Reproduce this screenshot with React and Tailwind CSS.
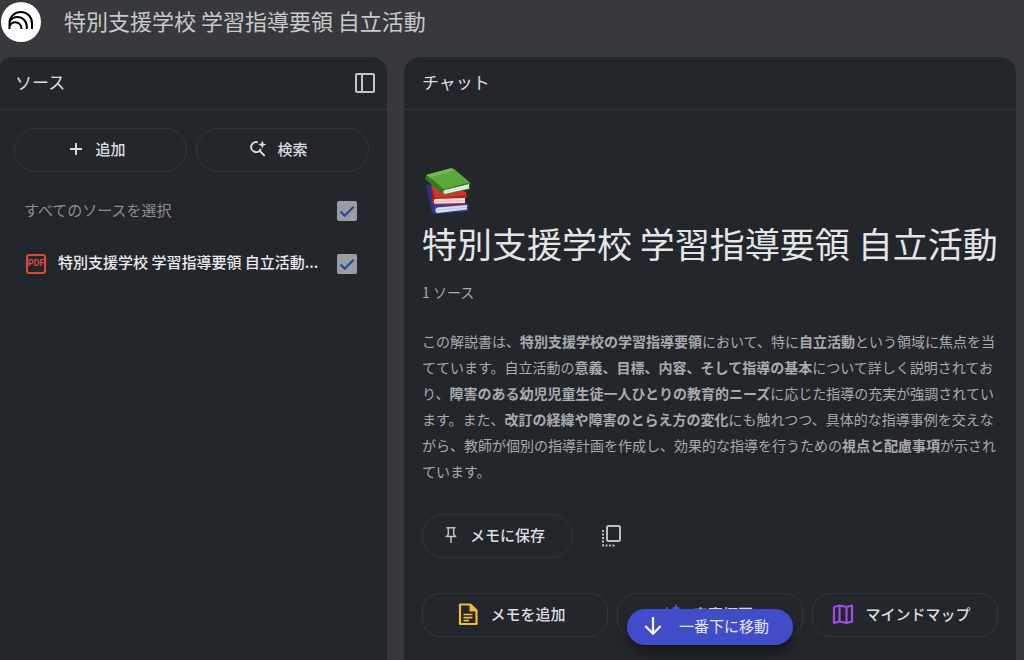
import { useState } from 'react'

const SUMMARY = [
  { text: 'この解説書は、' },
  { text: '特別支援学校の学習指導要領', bold: true },
  { text: 'において、特に' },
  { text: '自立活動', bold: true },
  { text: 'という領域に焦点を当てています。自立活動の' },
  { text: '意義、目標、内容、そして指導の基本', bold: true },
  { text: 'について詳しく説明されており、' },
  { text: '障害のある幼児児童生徒一人ひとりの教育的ニーズ', bold: true },
  { text: 'に応じた指導の充実が強調されています。また、' },
  { text: '改訂の経緯や障害のとらえ方の変化', bold: true },
  { text: 'にも触れつつ、具体的な指導事例を交えながら、教師が個別の指導計画を作成し、効果的な指導を行うための' },
  { text: '視点と配慮事項', bold: true },
  { text: 'が示されています。' },
]

const outlined = 'flex h-11 items-center justify-center gap-2.5 border border-[#34373b] pr-2 pb-0.5 text-[15px] font-medium text-[#dcdde0] hover:bg-white/5'

function Logo() {
  return (
    <svg viewBox="0 0 40 40" className="size-10" aria-hidden="true">
      <circle cx="20" cy="20" r="20" fill="#fff" />
      <g fill="none" stroke="#000" strokeWidth="2">
        <path d="M8.500 27v-5.500C8.500 15 13.300 10 19.800 10S31 15 31 21.500V27" />
        <path d="M8.500 19.500C10.500 16.500 13 15 16.200 15c5.400 0 9.600 4.200 9.600 9.600V27" />
        <path d="M8.500 24.200c1-2.500 3.200-4 5.700-4 3.600 0 6.400 2.900 6.400 6.800" />
      </g>
    </svg>
  )
}

function PanelIcon() {
  return (
    <svg viewBox="0 0 24 24" className="size-6" fill="none" stroke="#c4c5c7" strokeWidth="2" aria-hidden="true">
      <rect x="3" y="3" width="18" height="18" rx="1" />
      <path d="M9 3v18" />
    </svg>
  )
}

function PlusIcon() {
  return (
    <svg viewBox="0 0 18 18" className="size-[18px]" stroke="#dcdde0" strokeWidth="1.9" aria-hidden="true">
      <path d="M9 3v12M3 9h12" />
    </svg>
  )
}

function SearchSparkIcon() {
  return (
    <svg viewBox="0 0 18 18" className="size-[18px]" aria-hidden="true">
      <path d="M8.700 2.300A5 5 0 1 0 11.800 8.800M10.300 10.500l5.400 5.400" fill="none" stroke="#dcdde0" strokeWidth="1.900" />
      <path d="M13.300.500l1.100 3 3 1.100-3 1.100-1.100 3-1.100-3-3-1.100 3-1.100z" fill="#dcdde0" />
    </svg>
  )
}

function Books() {
  return (
    <svg viewBox="0 0 52 48" className="h-12 w-[52px]" aria-hidden="true">
      <path d="M4 18l5-1 8 20-4 10-3-1z" fill="#26358a" />
      <path d="M11 37l31-2 5 3-1 1v4l1 1-34 3z" fill="#2f43a6" />
      <path d="M15 40.500l30-2.500v4.500L15 46c-2-1-2-4 0-5.500z" fill="#d9deee" />
      <path d="M15 43.300l30-3" stroke="#a9aebf" strokeWidth=".6" />
      <path d="M9 19l8-3 27 9 1 5-32 3z" fill="#d2332a" />
      <path d="M9 19l4 13-1 5-2-1z" fill="#96201c" />
      <path d="M12 30.500l32-2 .500 1.500-2 1.500v4.500l2 1.500L12 38c-2.500-1.500-2.500-6 0-7.500z" fill="#b3261e" />
      <path d="M13 32l30-1v5l-30 .800c-1.500-1.300-1.500-3.500 0-4.800z" fill="#eddfe3" />
      <path d="M13 34.500l30-.800" stroke="#b8a9ae" strokeWidth=".6" />
      <path d="M4 8L29 1.300c1-.3 2 0 3 .700L48 15.500 22 22.500z" fill="#58a83a" />
      <path d="M4 8L29 1.300l3 2.200L8 10.500z" fill="#73bb50" />
      <path d="M4 8l-1 4 16 14 3.500-1L22 22z" fill="#347a20" />
      <path d="M22 22.500l26-7 1 1.200-2 1.300.300 3.500L49 22l-27.500 6-2-2c0-1.500 1-3 2.500-3.500z" fill="#3d8927" />
      <path d="M22.500 23.300l24.500-6 .300 4L22.500 27c-1.200-1-1.200-2.800 0-3.700z" fill="#f0f2ee" />
      <path d="M22.500 25.200l24.500-5.700" stroke="#b5b9b0" strokeWidth=".6" />
    </svg>
  )
}

function PinIcon() {
  return (
    <svg viewBox="0 0 18 18" className="size-[18px]" fill="none" stroke="#bdbec1" strokeWidth="1.500" aria-hidden="true">
      <path d="M4.500 1.700h9M6.300 2v6.500L4.600 10.600h8.800L11.700 8.500V2M9 10.600V17" />
    </svg>
  )
}

function CopyIcon() {
  return (
    <svg viewBox="0 0 24 24" className="size-6" fill="none" stroke="#bdbec1" strokeWidth="2" aria-hidden="true">
      <rect x="8" y="2" width="13" height="15" rx="1.500" />
      <path d="M4 6v14.500" strokeDasharray="2 1.500" />
      <path d="M3 21.500h13.500" strokeDasharray="2 1.500" />
    </svg>
  )
}

function NoteIcon() {
  return (
    <svg viewBox="0 0 24 24" className="size-6" fill="none" stroke="#f0bb3c" strokeWidth="2.200" aria-hidden="true">
      <path d="M4 2.500h10.500L20.500 8.500V22H4z" strokeLinejoin="round" />
      <path d="M13.500 2.500v7h7z" fill="#f0bb3c" stroke="none" />
      <path d="M7.500 12.500h9M7.500 15.700h9M7.500 18.700h5.500" strokeWidth="1.700" />
    </svg>
  )
}

function AudioSparkIcon() {
  return (
    <svg viewBox="0 0 24 24" className="size-6" aria-hidden="true">
      <path d="M4 10v5M8 5v15M12 9v8M16 12v8M20 13v4" stroke="#4a57d8" strokeWidth="2" />
      <path d="M17 1.500l1.200 3.300 3.300 1.200-3.300 1.200L17 10.500l-1.200-3.300L12.500 6l3.300-1.200z" fill="#4a57d8" />
    </svg>
  )
}

function MapIcon() {
  return (
    <svg viewBox="0 0 24 24" className="size-6" fill="none" stroke="#a04ee6" strokeWidth="2.200" strokeLinejoin="round" aria-hidden="true">
      <path d="M3 5l5.500-1.500 7 1.500L21 3.500V19.500L15.500 21l-7-1.500L3 21zM8.500 3.500v16M15.500 5v16" />
    </svg>
  )
}

function ArrowDownIcon() {
  return (
    <svg viewBox="0 0 20 20" className="size-5" fill="none" stroke="#fff" strokeWidth="2.200" aria-hidden="true">
      <path d="M10 1v16M2.300 10l7.700 7.700L17.700 10" />
    </svg>
  )
}

function Checkbox({ id, checked, onChange }) {
  return (
    <span className="grid size-5 shrink-0">
      <input
        id={id}
        type="checkbox"
        checked={checked}
        onChange={onChange}
        className="peer col-start-1 row-start-1 size-5 appearance-none rounded-[2px] border-2 border-[#9a9ca5] checked:bg-[#9a9ca5]"
      />
      <svg viewBox="0 0 20 20" className="pointer-events-none col-start-1 row-start-1 hidden size-5 peer-checked:block" fill="none" stroke="#274690" strokeWidth="2.200" aria-hidden="true">
        <path d="M3.500 10.500l4.200 4.200L16.700 5.700" />
      </svg>
    </span>
  )
}

function SourcePanel() {
  const [selected, setSelected] = useState(true)
  const toggle = () => setSelected(!selected)

  return (
    <aside className="rounded-tl-xl rounded-tr-2xl bg-[#23262b]">
      <div className="flex h-[53px] items-center justify-between border-b border-[#34373b] pr-2.5 pl-[15px]">
        <h2 className="pb-0.5 text-[17px] text-[#dcdde0]">ソース</h2>
        <button aria-label="パネルを閉じる"><PanelIcon /></button>
      </div>

      <div className="grid grid-cols-2 gap-[9px] pt-[18px] pr-[18px] pl-3.5">
        <button className={`${outlined} rounded-full`}><PlusIcon />追加</button>
        <button className={`${outlined} rounded-full`}><SearchSparkIcon />検索</button>
      </div>

      <div className="mt-[13px] pr-[30px] pl-6">
        <div className="flex h-[52px] items-center justify-between">
          <label htmlFor="all" className="pb-0.5 text-[15px] text-[#8d8f93]">すべてのソースを選択</label>
          <Checkbox id="all" checked={selected} onChange={toggle} />
        </div>
        <div className="flex h-[53px] items-center">
          <span className="ml-0.5 flex size-5 shrink-0 items-center justify-center rounded-[3px] border-2 border-[#d9493c] font-['Roboto',sans-serif] text-[9px] leading-none font-bold text-[#d9493c]">PDF</span>
          <label htmlFor="src" className="ml-3 flex-1 pb-0.5 text-[15px] font-medium whitespace-nowrap text-[#ececee]">特別支援学校 学習指導要領 自立活動...</label>
          <Checkbox id="src" checked={selected} onChange={toggle} />
        </div>
      </div>
    </aside>
  )
}

function ChatPanel() {
  return (
    <main className="relative rounded-t-2xl bg-[#23262b]">
      <div className="flex h-[53px] items-center border-b border-[#34373b] px-[18px]">
        <h2 className="pb-0.5 text-[17px] text-[#dcdde0]">チャット</h2>
      </div>

      <div className="px-[18px] pt-[57px] pb-6">
        <Books />
        <h1 className="mt-[5px] text-[35px] leading-[46px] whitespace-nowrap text-[#e4e5e7]">特別支援学校 学習指導要領 自立活動</h1>
        <p className="mt-4 text-sm leading-5 text-[#a9abae]">1 ソース</p>

        <p className="mt-[26px] text-sm leading-[26px] text-[#a9abae]">
          {SUMMARY.map((part, i) => part.bold ? <b key={i}>{part.text}</b> : part.text)}
        </p>

        <div className="mt-[30px] flex items-center gap-[26px]">
          <button className={`${outlined} w-[151px] rounded-full`}><PinIcon />メモに保存</button>
          <button aria-label="コピー"><CopyIcon /></button>
        </div>

        <div className="mt-[35px] grid grid-cols-3 gap-[9px]">
          <button className={`${outlined} rounded-[18px]`}><NoteIcon />メモを追加</button>
          <button className={`${outlined} rounded-[18px]`}><AudioSparkIcon />音声概要</button>
          <button className={`${outlined} rounded-[18px]`}><MapIcon />マインドマップ</button>
        </div>
      </div>

      <button className="absolute bottom-4 left-1/2 flex h-9 w-[166px] -translate-x-1/2 items-center justify-center gap-4 rounded-full bg-[#414cc8] pr-2 pb-0.5 text-[15px] whitespace-nowrap text-[#e6e7fa] shadow-lg shadow-black/40">
        <ArrowDownIcon />一番下に移動
      </button>
    </main>
  )
}

export default function App() {
  return (
    <div className="flex min-h-screen flex-col bg-[#38393c] font-['Noto_Sans_CJK_JP',sans-serif]">
      <header className="flex h-[57px] items-center gap-[23px] pb-[13px] pl-px">
        <Logo />
        <div className="pb-1 text-[22px] text-[#c8c9cc]">特別支援学校 学習指導要領 自立活動</div>
      </header>
      <div className="grid flex-1 grid-cols-[387fr_612fr] gap-[17px] pr-2">
        <SourcePanel />
        <ChatPanel />
      </div>
    </div>
  )
}
